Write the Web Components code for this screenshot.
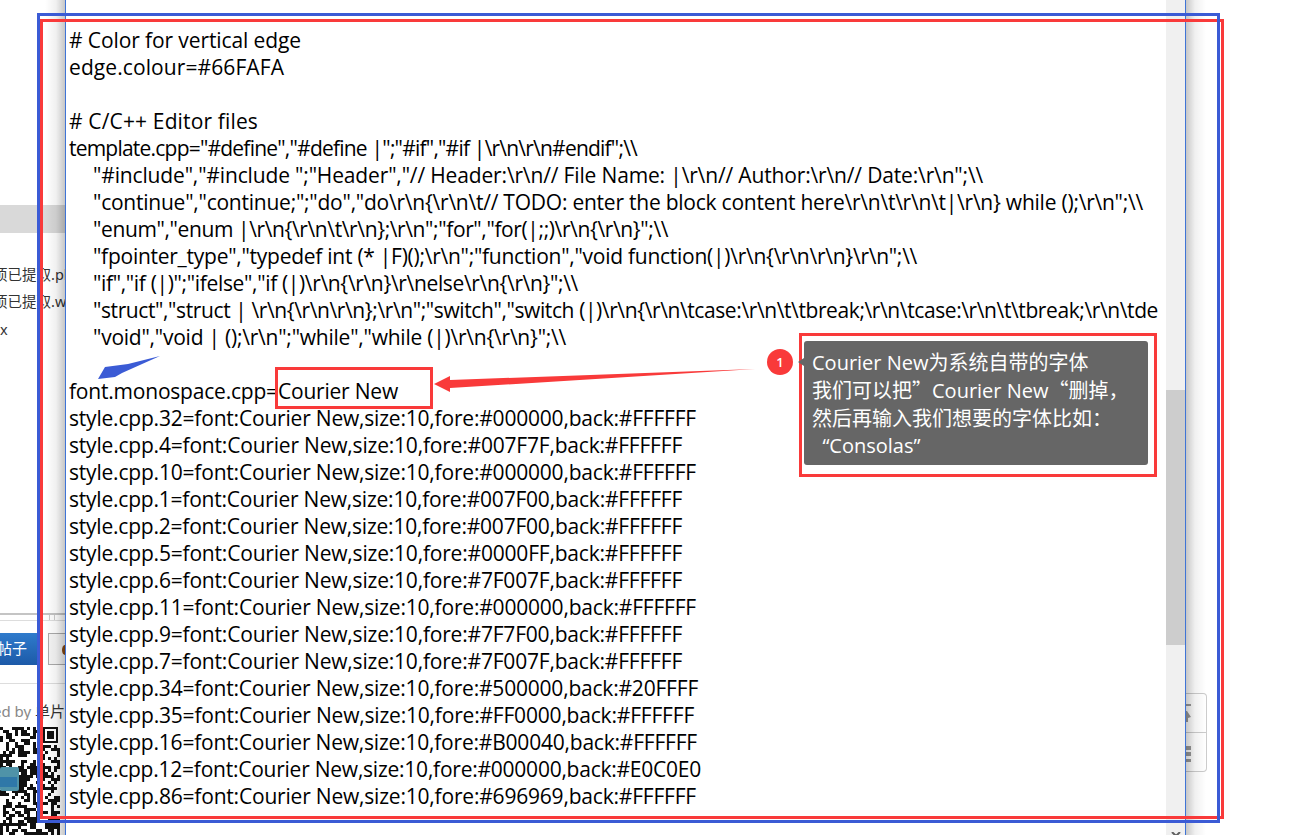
<!DOCTYPE html>
<html><head><meta charset="utf-8">
<style>
html,body{margin:0;padding:0;background:#fff;overflow:hidden}
body{width:1306px;height:835px;position:relative;font-family:"Open Sans","Noto Sans CJK SC",sans-serif}
</style></head><body>
<bg-page></bg-page>
<editor-window></editor-window>
<annot-layer></annot-layer>
<template id="bg"><style>
:host{display:block;position:absolute;inset:0;font:14px "Noto Sans","Noto Sans CJK SC",sans-serif;color:#333}
.band{position:absolute;left:0;top:205px;width:66px;height:28px;background:#d9d9d9}
.t{position:absolute;left:0;white-space:nowrap;width:66px;overflow:hidden;font-size:14.5px;line-height:18px}
.t span{margin-left:-7px}
.rule{position:absolute;left:0;top:613px;width:66px;height:8px;border-top:2px solid #c4c4c4;border-bottom:1px solid #ddd;box-sizing:border-box;display:flex;justify-content:flex-end;gap:4px;padding-right:11px}
.rule i{width:1px;background:#ccc}
.btn{position:absolute;left:0;top:633px;width:39px;height:32px;background:linear-gradient(#2f7bcc,#1c5aa8);color:#fff;font-size:15px;line-height:31px;white-space:nowrap;overflow:hidden}
.btn span{margin-left:-3px}
.btn2{position:absolute;left:48px;top:633px;width:18px;height:32px;background:#f5f5f5;border:1px solid #aaa;border-right:0;box-sizing:border-box;overflow:hidden}
.btn2 i{position:absolute;left:13px;top:11px;width:6px;height:10px;background:#8a4a12;border-radius:50%}
.line{position:absolute;left:0;top:683px;width:66px;height:1px;background:#ddd}
.by{position:absolute;left:0;top:702px;width:66px;overflow:hidden;white-space:nowrap;color:#888;font-size:15px;line-height:18px}
.by span{margin-left:-7px}
.by b{font-weight:400;color:#333}
.qr{position:absolute;left:0;top:727px;width:60px;height:108px}
.side{position:absolute;left:1185px;top:693px;width:22px;height:79px;box-sizing:border-box;border:1px solid #ccc;border-left:0;border-radius:0 4px 4px 0;background:#fff}
.side i{position:absolute;left:0;top:38px;width:100%;height:1px;background:#ccc}
.side svg{position:absolute;left:0;top:0}
</style>
<div class="band"></div>
<div class="t" style="top:265px"><span>项已提取.pk</span></div>
<div class="t" style="top:292px"><span>项已提取.wa</span></div>
<div class="t" style="top:320px">x</div>
<div class="rule"><i></i><i></i></div>
<div class="btn"><span>帖子</span></div><div class="btn2"><i></i></div>
<div class="line"></div>
<div class="by"><span>ed by <b>单片</b></span></div>
<svg class="qr" viewBox="0 0 60 108" shape-rendering="crispEdges"><g id="q" fill="#111"></g>
<rect x="0" y="40" width="19" height="24" rx="2" fill="#4f93a8" shape-rendering="auto"/>
<rect x="0" y="50" width="17" height="10" fill="#2f78a8" shape-rendering="auto"/></svg>
<div class="side"><svg width="8" height="76" viewBox="0 0 8 76"><g fill="#9a9a9a"><rect x="0" y="10" width="6" height="2"/><path d="M0 17 L2 17 L6 23 L3 24 L3 28 L0 28Z"/><rect x="0" y="52" width="6" height="4"/><rect x="0" y="58" width="6" height="4"/><rect x="0" y="65" width="6" height="3"/></g></svg><i></i></div>
</template>
<template id="ed"><style>
:host{display:block;position:absolute;left:65px;top:0;width:1121px;height:835px;box-sizing:border-box;background:#fff;border-left:1px solid #3f74d6;border-right:1px solid #3f74d6}
.shL,.shR{position:absolute;top:0;bottom:0;width:20px}
.shL{left:-21px;background:linear-gradient(to left,rgba(0,0,0,.22),rgba(0,0,0,.06) 45%,rgba(0,0,0,0))}
.shR{right:-21px;background:linear-gradient(to right,rgba(0,0,0,.22),rgba(0,0,0,.06) 45%,rgba(0,0,0,0))}
.scroll{position:absolute;right:0;top:0;bottom:0;width:19px;background:#f0f0f0}
.thumb{position:absolute;left:0;right:0;top:390px;height:255px;background:#cdcdcd}
.down{position:absolute;left:5px;bottom:-3px;width:10px;height:6px}
.code{position:absolute;left:3px;top:27px;width:1089px;overflow:hidden;font:21px/27px "Open Sans","Noto Sans CJK SC",sans-serif;color:#000}
.l{height:27px;white-space:pre}
.i{padding-left:24px}
</style>
<div class="shL"></div><div class="shR"></div>
<div class="code" id="code"></div>
<div class="scroll"><div class="thumb"></div><svg class="down" viewBox="0 0 10 6"><path d="M1 0 L5 4 L9 0" fill="none" stroke="#606060" stroke-width="2"/></svg></div>
</template>
<template id="an"><style>
:host{display:block;position:absolute;inset:0;pointer-events:none}
.box{position:absolute;box-sizing:border-box}
.o1{left:37px;top:13px;width:1183px;height:810px;border:3px solid #3b5bd5}
.o2{left:40px;top:19px;width:1184px;height:800px;border:3px solid #f93a3a}
.o3{left:275px;top:367px;width:158px;height:42px;border:3px solid #f93a3a}
.o4{left:799px;top:333px;width:358px;height:144px;border:3px solid #f93a3a;background:#fff}
.tip{position:absolute;left:804px;top:341px;width:344px;height:124px;box-sizing:border-box;background:#666;border-radius:3px;color:#fff;padding:7px 8px;font:20px/28px "Open Sans","Noto Sans CJK SC",sans-serif}
.tip div{height:28px;white-space:pre}
.tip b{font:400 20px/28px "Noto Sans CJK SC",sans-serif}
.dot{position:absolute;left:767px;top:349px;width:26px;height:26px;border-radius:50%;background:#f93a3a;color:#fff;font:600 13px/26px "Open Sans",sans-serif;text-align:center}
svg{position:absolute;left:0;top:0}
</style>
<div class="box o2"></div><div class="box o1"></div><div class="box o3"></div><div class="box o4"></div>
<svg width="1306" height="835" viewBox="0 0 1306 835">
<path d="M160 356 L128 364 L105 367 L98 379 L115 377 L122 373 Z" fill="#3b5bd5"/>
<path d="M434 384 L450 376 L450 380 L755 369 L450 388 L450 392 Z" fill="#f93a3a"/>
<path d="M798 362 L804 358 L804 366 Z" fill="#666"/>
</svg>
<div class="dot">1</div>
<div class="tip"><div>Courier New<b>为系统自带的字体</b></div><div><b>我们可以把”</b>Courier New<b>“删掉，</b></div><div><b>然后再输入我们想要的字体比如：</b></div><div>  “Consolas”</div></div>
</template>
<script>
const L=[
["# Color for vertical edge",302],
["edge.colour=#66FAFA",285],
["",0],
["# C/C++ Editor files",259],
['template.cpp="#define","#define |";"#if","#if |\\r\\n\\r\\n#endif";\\\\',638],
['"#include","#include ";"Header","// Header:\\r\\n// File Name: |\\r\\n// Author:\\r\\n// Date:\\r\\n";\\\\',984,1],
['"continue","continue;";"do","do\\r\\n{\\r\\n\\t// TODO: enter the block content here\\r\\n\\t\\r\\n\\t|\\r\\n} while ();\\r\\n";\\\\',1144,1],
['"enum","enum |\\r\\n{\\r\\n\\t\\r\\n};\\r\\n";"for","for(|;;)\\r\\n{\\r\\n}";\\\\',669,1],
['"fpointer_type","typedef int (* |F)();\\r\\n";"function","void function(|)\\r\\n{\\r\\n\\r\\n}\\r\\n";\\\\',918,1],
['"if","if (|)";"ifelse","if (|)\\r\\n{\\r\\n}\\r\\nelse\\r\\n{\\r\\n}";\\\\',579,1],
['"struct","struct | \\r\\n{\\r\\n\\r\\n};\\r\\n";"switch","switch (|)\\r\\n{\\r\\n\\tcase:\\r\\n\\t\\tbreak;\\r\\n\\tcase:\\r\\n\\t\\tbreak;\\r\\n\\tdefault:\\r\\n\\t\\tbreak;\\r\\n}";\\\\',1159,1,'"struct","struct | \\r\\n{\\r\\n\\r\\n};\\r\\n";"switch","switch (|)\\r\\n{\\r\\n\\tcase:\\r\\n\\t\\tbreak;\\r\\n\\tcase:\\r\\n\\t\\tbreak;\\r\\n\\tde'],
['"void","void | ();\\r\\n";"while","while (|)\\r\\n{\\r\\n}";\\\\',567,1],
["",0],
["font.monospace.cpp=Courier New",399],
["style.cpp.32=font:Courier New,size:10,fore:#000000,back:#FFFFFF",697],
["style.cpp.4=font:Courier New,size:10,fore:#007F7F,back:#FFFFFF",683],
["style.cpp.10=font:Courier New,size:10,fore:#000000,back:#FFFFFF",697],
["style.cpp.1=font:Courier New,size:10,fore:#007F00,back:#FFFFFF",683],
["style.cpp.2=font:Courier New,size:10,fore:#007F00,back:#FFFFFF",683],
["style.cpp.5=font:Courier New,size:10,fore:#0000FF,back:#FFFFFF",683],
["style.cpp.6=font:Courier New,size:10,fore:#7F007F,back:#FFFFFF",683],
["style.cpp.11=font:Courier New,size:10,fore:#000000,back:#FFFFFF",697],
["style.cpp.9=font:Courier New,size:10,fore:#7F7F00,back:#FFFFFF",683],
["style.cpp.7=font:Courier New,size:10,fore:#7F007F,back:#FFFFFF",683],
["style.cpp.34=font:Courier New,size:10,fore:#500000,back:#20FFFF",699],
["style.cpp.35=font:Courier New,size:10,fore:#FF0000,back:#FFFFFF",695],
["style.cpp.16=font:Courier New,size:10,fore:#B00040,back:#FFFFFF",698],
["style.cpp.12=font:Courier New,size:10,fore:#000000,back:#E0C0E0",702],
["style.cpp.86=font:Courier New,size:10,fore:#696969,back:#FFFFFF",697]];
function mk(name,tid,init){customElements.define(name,class extends HTMLElement{constructor(){super();const r=this.attachShadow({mode:"open"});r.appendChild(document.getElementById(tid).content.cloneNode(true));init&&init(r)}})}
mk("bg-page","bg",r=>{
 let s=11,h="";const g=r.getElementById("q");
 for(let y=0;y<36;y++)for(let x=0;x<20;x++){s=(s*1103515245+12345)&0x7fffffff;if((s>>16)&1)h+=`<rect x="${x*3}" y="${y*3}" width="3" height="3"/>`}
 h+=`<rect x="42" y="0" width="18" height="18" fill="#fff"/><rect x="43" y="0" width="15" height="16" fill="#111"/><rect x="45" y="2" width="11" height="12" fill="#fff"/><rect x="47" y="4" width="7" height="8" fill="#111"/>`;
 g.innerHTML=h;
});
mk("editor-window","ed",r=>{
 const c=r.getElementById("code"),ctx=document.createElement("canvas").getContext("2d");
 ctx.font='21px "Open Sans","Noto Sans CJK SC",sans-serif';
 for(const [t,end,ind,pre] of L){
  const d=document.createElement("div");d.className="l"+(ind?" i":"");d.textContent=t;
  if(t){const m=pre||t,w=ctx.measureText(m).width,x0=ind?94:70;d.style.letterSpacing=((end-x0-w)/m.length).toFixed(3)+"px"}
  c.appendChild(d);
 }
});
mk("annot-layer","an");
</script>
</body></html>
